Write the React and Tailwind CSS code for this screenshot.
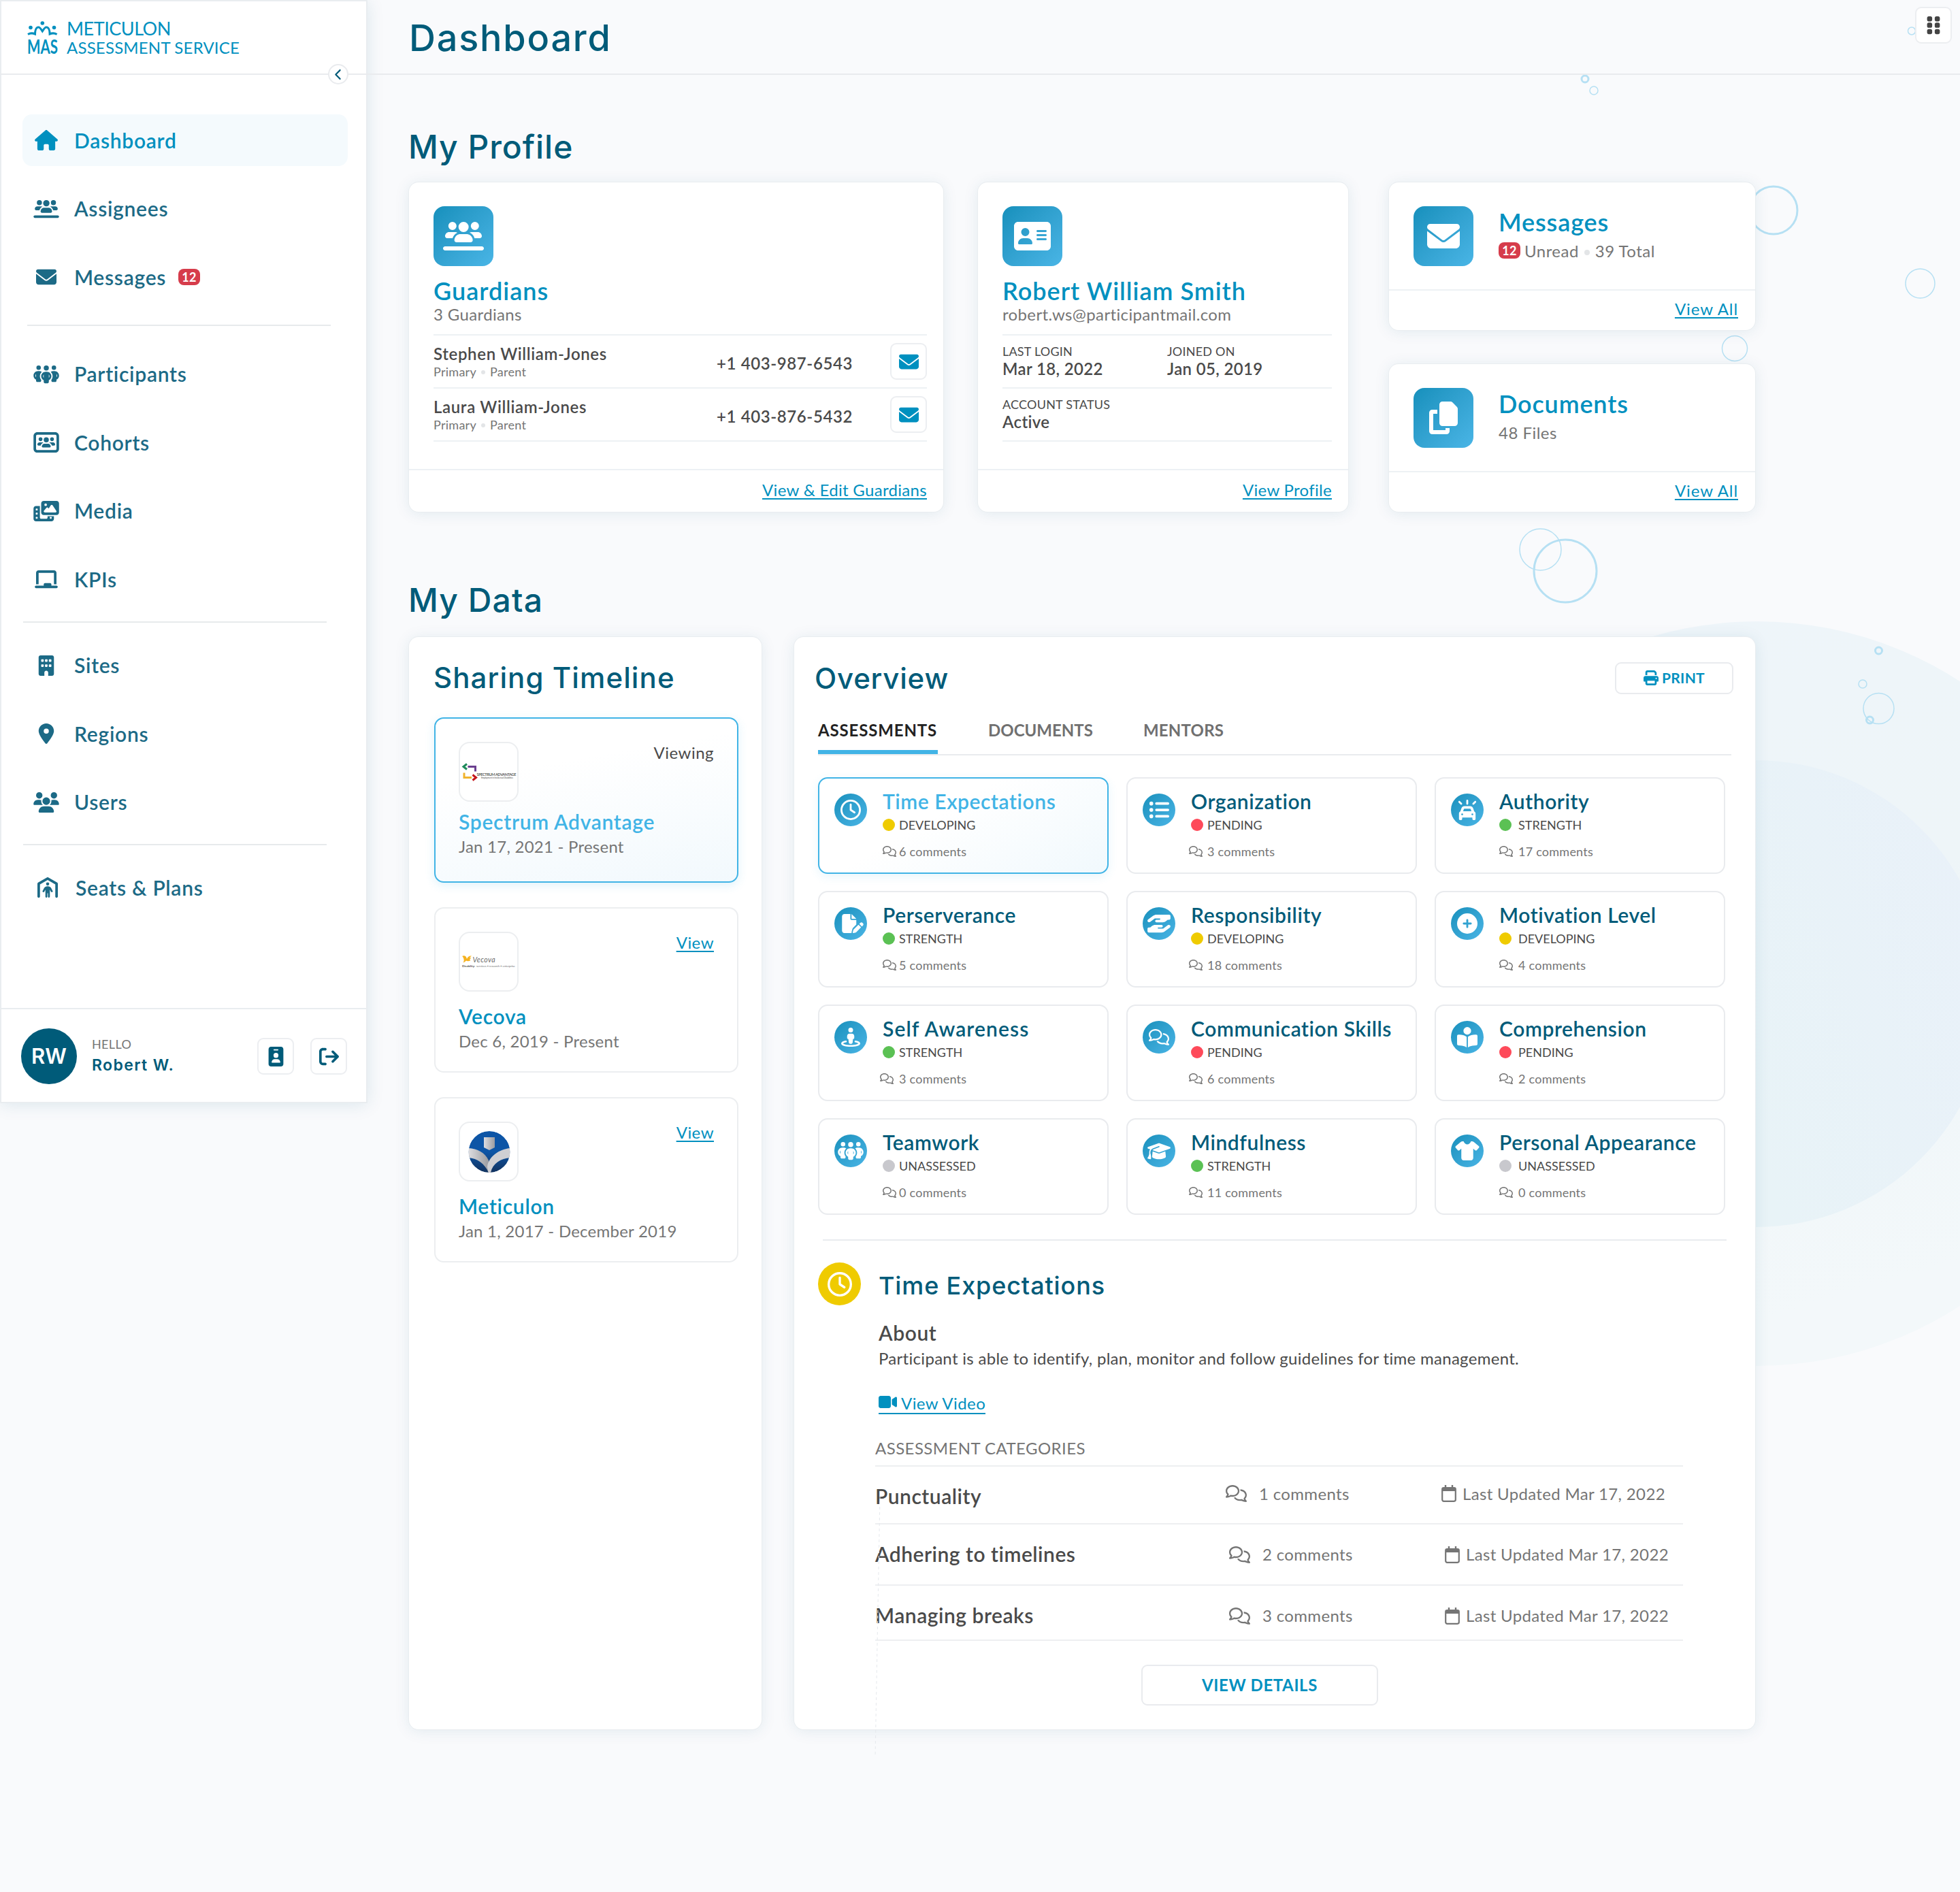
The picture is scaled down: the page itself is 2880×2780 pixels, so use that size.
import {
  FaAddressCard,
  FaArrowRightFromBracket,
  FaBookOpenReader,
  FaBuilding,
  FaCarOn,
  FaChalkboard,
  FaChevronLeft,
  FaCirclePlus,
  FaCopy,
  FaEnvelope,
  FaFilePen,
  FaGraduationCap,
  FaGripVertical,
  FaHandHoldingHand,
  FaHouse,
  FaIdBadge,
  FaListUl,
  FaLocationDot,
  FaPeopleGroup,
  FaPersonShelter,
  FaPhotoFilm,
  FaPrint,
  FaRegClock,
  FaRegComments,
  FaShirt,
  FaStreetView,
  FaUsers,
  FaUsersLine,
  FaUsersRectangle,
  FaVideo,
} from 'react-icons/fa6'

const HEADING = "font-['Inter',sans-serif] font-[450] text-[#005b79]"
const CARD =
  'bg-white rounded-[14px] shadow-[0_0_0_1px_#e9edf0,0_2px_22px_rgba(0,91,121,0.10)]'
const LINK = 'text-[#0090bf] underline decoration-2 underline-offset-[3px]'

const navGroups = [
  [
    { label: 'Dashboard', icon: FaHouse, active: true },
    { label: 'Assignees', icon: FaUsersLine },
    { label: 'Messages', icon: FaEnvelope, badge: 12 },
  ],
  [
    { label: 'Participants', icon: FaPeopleGroup },
    { label: 'Cohorts', icon: FaUsersRectangle },
    { label: 'Media', icon: FaPhotoFilm },
    { label: 'KPIs', icon: FaChalkboard },
  ],
  [
    { label: 'Sites', icon: FaBuilding },
    { label: 'Regions', icon: FaLocationDot },
    { label: 'Users', icon: FaUsers },
  ],
  [{ label: 'Seats & Plans', icon: FaPersonShelter }],
]

const groupClass = ['', 'mt-[21px]', 'mt-[13px]', 'mt-[12px] pl-[2px]']
const dividerClass = ['mt-[19px] ml-[40px]', 'mt-[11px] ml-[34px]', 'mt-[11px] ml-[34px]']

const guardians = [
  { name: 'Stephen William-Jones', phone: '+1 403-987-6543' },
  { name: 'Laura William-Jones', phone: '+1 403-876-5432' },
]

const assessments = [
  { title: 'Time Expectations', status: 'DEVELOPING', comments: 6, icon: FaRegClock, size: 'h-[30px]', active: true },
  { title: 'Organization', status: 'PENDING', comments: 3, icon: FaListUl, size: 'h-[30px]' },
  { title: 'Authority', status: 'STRENGTH', comments: 17, icon: FaCarOn, size: 'h-[30px]' },
  { title: 'Perserverance', status: 'STRENGTH', comments: 5, icon: FaFilePen, size: 'h-[28px] ml-[5px]' },
  { title: 'Responsibility', status: 'DEVELOPING', comments: 18, icon: FaHandHoldingHand, size: 'h-[30px]' },
  { title: 'Motivation Level', status: 'DEVELOPING', comments: 4, icon: FaCirclePlus, size: 'h-[30px]' },
  { title: 'Self Awareness', status: 'STRENGTH', comments: 3, icon: FaStreetView, size: 'h-[28px]' },
  { title: 'Communication Skills', status: 'PENDING', comments: 6, icon: FaRegComments, size: 'h-[24px]' },
  { title: 'Comprehension', status: 'PENDING', comments: 2, icon: FaBookOpenReader, size: 'h-[30px]' },
  { title: 'Teamwork', status: 'UNASSESSED', comments: 0, icon: FaPeopleGroup, size: 'h-[30px]' },
  { title: 'Mindfulness', status: 'STRENGTH', comments: 11, icon: FaGraduationCap, size: 'h-[27px]' },
  { title: 'Personal Appearance', status: 'UNASSESSED', comments: 0, icon: FaShirt, size: 'h-[28px]' },
]

// spacing of the small status / comment icons, one entry per column
const dotGap = ['mr-[6px]', 'mr-[6px]', 'mr-[10px]']
const commentGap = ['mr-[4px]', '-ml-[3px] mr-[7px]', 'mr-[8px]']

const statusColor = {
  DEVELOPING: 'bg-[#efcb00]',
  PENDING: 'bg-[#fe4a5a]',
  STRENGTH: 'bg-[#5bc154]',
  UNASSESSED: 'bg-[#c8c8cd]',
}

const categories = [
  { name: 'Punctuality', comments: 1, row: 'h-[85px] pt-[3px]', meta: '-mt-[7px]', shift: '' },
  { name: 'Adhering to timelines', comments: 2, row: 'h-[90px] pb-[2px]', meta: 'mt-[2px]', shift: 'pl-[5px]' },
  { name: 'Managing breaks', comments: 3, row: 'h-[81px] pt-[7px]', meta: 'mt-[2px]', shift: 'pl-[5px]' },
]

const bubbles = [
  [2809, 45.5, 5.5, 1.5],
  [2329, 116, 5, 3],
  [2342, 133, 6, 1.5],
  [2606, 309, 35, 3],
  [2821.5, 416.5, 21.5, 1.5],
  [2549, 512, 18.5, 1.5],
  [2263.5, 807.5, 30.5, 1.5],
  [2300, 839, 46, 3],
  [2760.5, 956, 5, 3],
  [2737, 1005, 6, 1.5],
  [2760.5, 1041, 22.5, 1.5],
  [2747.5, 1058, 5, 3],
]

function Backdrop() {
  return (
    <svg className="absolute inset-0" width="2880" height="2780" viewBox="0 0 2880 2780" fill="none">
      <defs>
        <linearGradient id="outer" x1="0" y1="0" x2="0.3" y2="1">
          <stop offset="0" stopColor="#eef5fa" />
          <stop offset="0.5" stopColor="#eef5f8" />
          <stop offset="1" stopColor="#f3f8fa" />
        </linearGradient>
        <linearGradient id="inner" x1="0" y1="0.6" x2="1" y2="0.3">
          <stop offset="0.4" stopColor="#e8f3f7" />
          <stop offset="1" stopColor="#e9f1f9" />
        </linearGradient>
      </defs>
      <circle cx="2582" cy="1460" r="547" fill="url(#outer)" />
      <circle cx="2580" cy="1460" r="343" fill="url(#inner)" />
      {bubbles.map(([cx, cy, r, w]) => (
        <circle key={`${cx}-${cy}`} cx={cx} cy={cy} r={r} stroke="#b6e0f3" strokeWidth={w} />
      ))}
    </svg>
  )
}

function Logo() {
  return (
    <div className="flex pl-[38px] pt-[30px] text-[#0090bf]">
      <svg className="shrink-0" width="54" height="64" viewBox="-2 0 54 64" fill="none">
        <circle cx="5" cy="10.5" r="2.8" fill="currentColor" />
        <circle cx="22.3" cy="4" r="2.8" fill="currentColor" />
        <circle cx="39.5" cy="10.5" r="2.8" fill="currentColor" />
        <path
          d="M1 20.5c4-2.500 7-2 10.500-.5 0-5 1.500-10 5-10 2.500 0 4.500 4 5.800 6 1.300-2 3.300-6 5.800-6 3.500 0 5 5 5 10 3.500-1.500 6.500-2 10.500.5"
          stroke="currentColor"
          strokeWidth="3"
        />
        <text x="0" y="49" fontSize="29" fontWeight="700" textLength="45" lengthAdjust="spacingAndGlyphs" fill="currentColor">
          MAS
        </text>
      </svg>
      <div className="ml-[6px]">
        <div className="h-[26px] text-[27px] leading-[24px] tracking-[-0.018em]">METICULON</div>
        <div className="whitespace-nowrap text-[24px] leading-[28px] tracking-[0.008em]">ASSESSMENT SERVICE</div>
      </div>
    </div>
  )
}

function CalendarIcon() {
  return (
    <svg className="mr-[9px] shrink-0" width="22" height="25" viewBox="0 0 22 25" fill="none">
      <path d="M6 0v5M16 0v5" stroke="currentColor" strokeWidth="2.400" />
      <rect x="1.200" y="4.200" width="19.600" height="19.600" rx="2.200" stroke="currentColor" strokeWidth="2.200" />
      <path d="M1 4h20v5H1z" fill="currentColor" />
    </svg>
  )
}

function Badge({ children }) {
  return (
    <span className="flex h-[24px] w-[32px] items-center justify-center rounded-[8px] bg-[#d63c4b] text-[18px] font-bold leading-none tracking-[0.02em] text-white">
      {children}
    </span>
  )
}

function IconButton({ icon: Icon, className }) {
  return (
    <button className="flex h-[54px] w-[54px] shrink-0 items-center justify-center rounded-[9px] border-2 border-[#eceef1] bg-white">
      <Icon className={className} />
    </button>
  )
}

function Sidebar() {
  return (
    <aside className="relative flex h-[1621px] w-[540px] shrink-0 flex-col bg-white shadow-[inset_0_0_0_2px_#e9edf0,0_2px_24px_rgba(0,91,121,0.12)]">
      <div className="relative h-[110px] shrink-0 border-b-2 border-[#e9ebee]">
        <Logo />
        <button className="absolute left-[482px] top-[94px] flex h-[30px] w-[30px] items-center justify-center rounded-full border-2 border-[#e9ebee] bg-white text-[#005b79]">
          <FaChevronLeft className="h-[17px] w-[17px]" />
        </button>
      </div>

      <nav className="pt-[46px]">
        {navGroups.map((group, i) => (
          <div key={i}>
            <div className={groupClass[i]}>
              {group.map(({ label, icon: Icon, active, badge }) => (
                <div key={label} className="flex h-[100.5px] items-center pl-[33px]">
                  <div
                    className={`flex h-[76px] w-[478px] items-center rounded-[14px] ${
                      active ? 'bg-[#f4fafd] text-[#0090bf]' : 'text-[#1c6a86]'
                    }`}
                  >
                    <div className="flex w-[70px] justify-center">
                      <Icon className="h-[30px] w-[38px]" />
                    </div>
                    <span className="ml-[6px] text-[30px] font-semibold tracking-[0.024em]">{label}</span>
                    {badge && (
                      <span className="ml-[18px]">
                        <Badge>{badge}</Badge>
                      </span>
                    )}
                  </div>
                </div>
              ))}
            </div>
            {i < 3 && <div className={`h-[2px] w-[446px] bg-[#e7eaec] ${dividerClass[i]}`} />}
          </div>
        ))}
      </nav>

      <div className="mt-auto flex h-[140px] shrink-0 items-center border-t-2 border-[#e9edf0] pl-[31px]">
        <div className="flex h-[82px] w-[82px] items-center justify-center rounded-full bg-[#005b79] font-['Inter',sans-serif] text-[31px] font-semibold text-white">
          RW
        </div>
        <div className="-mt-[3px] ml-[22px] w-[243px]">
          <div className="text-[18px] leading-[28px] tracking-[0.02em] text-[#757575]">HELLO</div>
          <div className="mt-px font-['Inter',sans-serif] text-[23px] font-semibold leading-[32px] tracking-[0.06em] text-[#005b79]">
            Robert W.
          </div>
        </div>
        <div className="flex gap-6 text-[#005b79]">
          <IconButton icon={FaIdBadge} className="h-[29px] w-[29px]" />
          <IconButton icon={FaArrowRightFromBracket} className="h-[29px] w-[29px]" />
        </div>
      </div>
    </aside>
  )
}

function Tile({ icon: Icon }) {
  return (
    <div className="flex h-[88px] w-[88px] shrink-0 items-center justify-center rounded-[16px] bg-linear-135 from-[#1590bc] to-[#49b5e6] text-white">
      <Icon className="h-[48px] w-[60px]" />
    </div>
  )
}

function ProfileHead({ icon, title, subtitle }) {
  return (
    <>
      <Tile icon={icon} />
      <div className="mt-[16px] text-[36px] font-semibold leading-[40px] tracking-[0.028em] text-[#0090bf]">{title}</div>
      <div className="text-[24px] leading-[30px] tracking-[0.015em] text-[#757575]">{subtitle}</div>
    </>
  )
}

function GuardiansCard() {
  return (
    <div className={`flex h-[484px] w-[785px] flex-col ${CARD}`}>
      <div className="pl-[36px] pr-[24px] pt-[35px]">
        <ProfileHead icon={FaUsersLine} title="Guardians" subtitle="3 Guardians" />
        <div className="mt-[14px] border-t-2 border-[#edf1f4]">
          {guardians.map((g) => (
            <div key={g.name} className="flex h-[78px] items-center border-b-2 border-[#edf1f4]">
              <div className="flex-1 pt-[3px]">
                <div className="text-[24px] font-semibold leading-[28px] tracking-[0.027em] text-[#4a4a4a]">{g.name}</div>
                <div className="flex items-center text-[18px] leading-[25px] tracking-[0.015em] text-[#757575]">
                  Primary
                  <span className="mx-[7px] h-[6px] w-[6px] rounded-full bg-[#e3e5e7]" />
                  Parent
                </div>
              </div>
              <div className="mr-[55px] mt-[5px] text-[24px] font-semibold tracking-[0.025em] text-[#4a4a4a]">{g.phone}</div>
              <span className="text-[#0090bf]">
                <IconButton icon={FaEnvelope} className="h-[29px] w-[29px]" />
              </span>
            </div>
          ))}
        </div>
      </div>
      <div className="mt-auto flex h-[63px] items-center justify-end border-t-2 border-[#edf1f4] pb-[3px] pr-[24px]">
        <a className={`text-[24px] tracking-[0.013em] ${LINK}`}>View &amp; Edit Guardians</a>
      </div>
    </div>
  )
}

function Field({ label, value }) {
  return (
    <div className="w-[243px] pt-[11px] text-[#4a4a4a]">
      <div className="text-[18px] leading-[24px] tracking-[0.012em]">{label}</div>
      <div className="text-[24px] font-semibold leading-[28px] tracking-[0.015em]">{value}</div>
    </div>
  )
}

function ProfileCard() {
  return (
    <div className={`ml-[51px] flex h-[484px] w-[544px] flex-col ${CARD}`}>
      <div className="pl-[36px] pr-[24px] pt-[35px]">
        <ProfileHead icon={FaAddressCard} title="Robert William Smith" subtitle="robert.ws@participantmail.com" />
        <div className="mt-[14px] flex h-[80px] border-y-2 border-[#edf1f4]">
          <Field label="LAST LOGIN" value="Mar 18, 2022" />
          <Field label="JOINED ON" value="Jan 05, 2019" />
        </div>
        <div className="flex h-[78px] border-b-2 border-[#edf1f4]">
          <Field label="ACCOUNT STATUS" value="Active" />
        </div>
      </div>
      <div className="mt-auto flex h-[63px] items-center justify-end border-t-2 border-[#edf1f4] pb-[3px] pr-[24px]">
        <a className={`text-[24px] tracking-[0.013em] ${LINK}`}>View Profile</a>
      </div>
    </div>
  )
}

function SummaryCard({ icon, title, children }) {
  return (
    <div className={`h-[217px] w-[538px] ${CARD}`}>
      <div className="flex h-[157px] gap-[36px] pl-[36px] pt-[35px]">
        <Tile icon={icon} />
        <div className="pl-px pt-px">
          <div className="text-[36px] font-semibold leading-[44px] tracking-[0.024em] text-[#0090bf]">{title}</div>
          <div className="flex h-[42px] items-center text-[24px] tracking-[0.02em] text-[#757575]">{children}</div>
        </div>
      </div>
      <div className="flex h-[60px] items-center justify-end border-t-2 border-[#edf1f4] pb-[4px] pr-[25px]">
        <a className={`text-[24px] tracking-[0.038em] ${LINK}`}>View All</a>
      </div>
    </div>
  )
}

function SpectrumLogo() {
  return (
    <svg width="84" height="84" viewBox="2 2 84 84" fill="none">
      <path d="M12 32.500l-5 4 5 4" stroke="#1f8a5b" strokeWidth="3" />
      <path d="M13.500 36.500h11v7" stroke="#6b3f8f" strokeWidth="3" />
      <path d="M8 45.500v7h11" stroke="#f0b32d" strokeWidth="3" />
      <path d="M20.500 48.500l5 4-5 4" stroke="#c4161c" strokeWidth="3" />
      <text x="26.500" y="50" fontSize="5.600" fontWeight="600" textLength="58" fill="#444">SPECTRUM ADVANTAGE</text>
      <text x="33" y="54" fontSize="3.200" textLength="47" fill="#555">Employment in Intellectual Disabilities</text>
    </svg>
  )
}

function VecovaLogo() {
  return (
    <svg width="84" height="84" viewBox="2 2 84 84" fill="none">
      <path
        d="M5 36c3-1.500 6-.5 7 4 1.500-3.500 3.500-5 7-4.500l-3 2.500 2.500.5-2.500 2 1.500 1.500c-2.500 1.500-5 1.500-6.500.5-1.500 1.500-3 2.500-4.500 3 1-1.500 1.500-3 1-5-.500-2-1-3.500-2.500-4.500z"
        fill="#f5b21f"
      />
      <text x="20.500" y="44.500" fontSize="10.500" fontStyle="italic" textLength="33" fill="#6b6b6b">Vecova</text>
      <text x="5" y="52" fontSize="4.500" fontWeight="700" textLength="19" fill="#555">Disability:</text>
      <text x="26" y="52" fontSize="4.500" textLength="57" fill="#777">services • research • enterprise</text>
    </svg>
  )
}

function MeticulonLogo() {
  return (
    <svg width="84" height="84" viewBox="2 2 84 84" fill="none">
      <defs>
        <linearGradient id="disc" x1="0" y1="0" x2="0" y2="1">
          <stop offset="0.500" stopColor="#0d55a6" />
          <stop offset="1" stopColor="#12325e" />
        </linearGradient>
        <linearGradient id="silver" x1="0" y1="0" x2="1" y2="0">
          <stop offset="0" stopColor="#dedee1" />
          <stop offset="1" stopColor="#9b9ca1" />
        </linearGradient>
        <clipPath id="round">
          <circle cx="45" cy="44.500" r="30.500" />
        </clipPath>
      </defs>
      <g clipPath="url(#round)">
        <circle cx="45" cy="44.500" r="30.500" fill="url(#disc)" />
        <path d="M14 39c14 1 24 6 30 18v18C38 62 28 54 14 53z" fill="url(#silver)" />
        <path d="M76 39C60 40 43 52 42 67l2 10 3-2c3-14 15-21 29-22z" fill="#cfcfd3" />
        <path d="M37 23h16v15l-8 4-8-4z" fill="url(#silver)" />
      </g>
    </svg>
  )
}

const timeline = [
  { name: 'Spectrum Advantage', dates: 'Jan 17, 2021 - Present', logo: SpectrumLogo, viewing: true },
  { name: 'Vecova', dates: 'Dec 6, 2019 - Present', logo: VecovaLogo },
  { name: 'Meticulon', dates: 'Jan 1, 2017 - December 2019', logo: MeticulonLogo },
]

function SharingTimeline() {
  return (
    <div className={`h-[1605px] w-[518px] pl-[37px] pt-[30px] ${CARD}`}>
      <h3 className={`-ml-px text-[42px] leading-[60px] tracking-[0.026em] ${HEADING}`}>Sharing Timeline</h3>
      <div className="mt-[28px] flex flex-col gap-[36px]">
        {timeline.map(({ name, dates, logo: OrgLogo, viewing }) => (
          <div
            key={name}
            className={`h-[243px] w-[447px] rounded-[14px] border-2 pl-[34px] pr-[34px] pt-[34px] ${
              viewing
                ? 'border-[#41b4e6] bg-linear-170 from-white from-30% to-[#f2f9fd] shadow-[0_4px_14px_rgba(65,180,230,0.16)]'
                : 'border-[#eceef0] bg-white'
            }`}
          >
            <div className="flex items-start justify-between text-[24px] leading-[32px] tracking-[0.02em]">
              <div className="h-[88px] w-[88px] rounded-[16px] border-2 border-[#eceef0] bg-white tracking-normal">
                <OrgLogo />
              </div>
              {viewing ? <span className="text-[#4a4a4a]">Viewing</span> : <a className={LINK}>View</a>}
            </div>
            <div
              className={`text-[30px] font-semibold leading-[40px] tracking-[0.024em] ${
                viewing ? 'mt-[9px] text-[#41b4e6]' : 'mt-[16px] text-[#0090bf]'
              }`}
            >
              {name}
            </div>
            <div className="mt-px text-[24px] leading-[32px] tracking-[0.01em] text-[#757575]">{dates}</div>
          </div>
        ))}
      </div>
    </div>
  )
}

function AssessmentCard({ title, status, comments, icon: Icon, size, active, column }) {
  const wide = title === 'Self Awareness'

  return (
    <div
      className={`flex h-[142px] rounded-[14px] border-2 pl-[22px] pt-[16px] ${
        active
          ? 'border-[#41b4e6] bg-linear-150 from-white from-40% to-[#f1f9fd] shadow-[0_4px_14px_rgba(65,180,230,0.12)]'
          : 'border-[#e9ebee] bg-white'
      }`}
    >
      <div className="mt-[6px] flex h-[48px] w-[48px] shrink-0 items-center justify-center rounded-full bg-linear-135 from-[#1590bc] to-[#49b5e6] text-white">
        <Icon className={`w-[38px] ${size}`} />
      </div>
      <div className="ml-[23px]">
        <div
          className={`whitespace-nowrap text-[30px] font-semibold leading-[34px] ${
            wide ? 'tracking-[0.037em]' : 'tracking-[0.019em]'
          } ${active ? 'text-[#41b4e6]' : 'text-[#005b79]'}`}
        >
          {title}
        </div>
        <div className="mt-[3px] flex h-[30px] items-center text-[18px] text-[#4a4a4a]">
          <span className={`h-[18px] w-[18px] rounded-full ${dotGap[column]} ${statusColor[status]}`} />
          {status}
        </div>
        <div className="mt-[9px] flex h-[30px] items-center text-[18px] tracking-[0.013em] text-[#757575]">
          <FaRegComments className={`h-[16px] w-[20px] ${wide ? '-ml-[4px] mr-[8px]' : commentGap[column]}`} />
          {comments} comments
        </div>
      </div>
    </div>
  )
}

function TimeExpectations() {
  return (
    <>
      <div className="ml-[35px] mt-[32px] flex h-[63px] items-center">
        <div className="flex h-[63px] w-[63px] items-center justify-center rounded-full bg-[#efcb00] text-white">
          <FaRegClock className="h-[36px] w-[36px]" />
        </div>
        <h4 className={`ml-[26px] pt-[5px] text-[36px] tracking-[0.024em] ${HEADING}`}>Time Expectations</h4>
      </div>
      <div className="ml-[124px] mt-[20px] text-[#4a4a4a]">
        <div className="text-[30px] font-semibold leading-[40px] tracking-[0.02em]">About</div>
        <p className="text-[24px] leading-[36px] tracking-[0.0125em]">
          Participant is able to identify, plan, monitor and follow guidelines for time management.
        </p>
        <a className="mt-[30px] flex h-[34px] w-fit items-center border-b-2 border-[#0090bf] text-[24px] leading-[34px] tracking-[0.018em] text-[#0090bf]">
          <FaVideo className="mr-[6px] h-[24px] w-[27px]" />
          <span className="pt-[3px]">View Video</span>
        </a>
      </div>
      <div className="ml-[119px] mt-[32px] w-[1187px] text-[24px] text-[#757575]">
        <div className="leading-[36px] tracking-[0.018em]">ASSESSMENT CATEGORIES</div>
        <div className="mt-[7px] border-t-2 border-[#edeff1]">
          {categories.map((c) => (
            <div key={c.name} className={`flex items-center border-b-2 border-[#edeff1] ${c.row}`}>
              <div className="w-[515px] text-[30px] font-semibold tracking-[0.017em] text-[#4a4a4a]">{c.name}</div>
              <div className={`flex w-[317px] items-center tracking-[0.014em] ${c.meta} ${c.shift}`}>
                <FaRegComments className="mr-[18px] h-[25px] w-[31px]" />
                {c.comments} comments
              </div>
              <div className={`flex items-center tracking-[0.014em] ${c.meta} ${c.shift}`}>
                <CalendarIcon />
                Last Updated Mar 17, 2022
              </div>
            </div>
          ))}
        </div>
      </div>
      <button className="ml-[510px] mt-[35px] flex h-[60px] w-[348px] items-center justify-center rounded-[9px] border-2 border-[#e9ebee] bg-white text-[24px] font-bold tracking-[0.025em] text-[#0090bf]">
        VIEW DETAILS
      </button>
    </>
  )
}

function Overview() {
  return (
    <div className={`relative ml-[48px] h-[1605px] w-[1412px] ${CARD}`}>
      <div className="flex h-[90px] items-center justify-between pl-[30px] pr-[32px] pt-[30px]">
        <h3 className={`text-[42px] tracking-[0.019em] ${HEADING}`}>Overview</h3>
        <button className="flex h-[47px] w-[174px] items-center justify-center rounded-[9px] border-2 border-[#e9ebee] bg-white text-[21px] font-bold tracking-[0.015em] text-[#0090bf]">
          <FaPrint className="mr-[5px] h-[22px] w-[22px]" />
          PRINT
        </button>
      </div>
      <div className="ml-[35px] mt-[28px] flex w-[1342px] gap-[74px] border-b-2 border-[#e9ebee] text-[24px] font-bold leading-[37px] text-[#707070]">
        <div className="h-[54px] w-[176px] border-b-[6px] border-[#41b4e6] tracking-[0.036em] text-[#222]">ASSESSMENTS</div>
        <div className="w-[154px]">DOCUMENTS</div>
        <div className="tracking-[0.008em]">MENTORS</div>
      </div>
      <div className="ml-[35px] mt-[32px] grid grid-cols-[427px_427px_427px] gap-x-[26px] gap-y-[25px]">
        {assessments.map((a, i) => (
          <AssessmentCard key={a.title} {...a} column={i % 3} />
        ))}
      </div>
      <div className="ml-[42px] mt-[36px] h-[2px] w-[1328px] bg-[#e9ecef]" />
      <TimeExpectations />
      {/* dashed guide beside the categories, runs past the bottom edge */}
      <svg className="absolute left-[117px] top-[1262px]" width="12" height="384" fill="none">
        <path d="M9 0L2 384" stroke="#e6e9ed" strokeWidth="1" strokeDasharray="4 4" />
      </svg>
    </div>
  )
}

export default function App() {
  return (
    <div className="relative flex h-[2780px] w-[2880px] items-start overflow-hidden bg-[#f9fafc] font-['Lato',sans-serif]">
      <Backdrop />
      <main className="relative order-2 flex-1">
        <header className="flex h-[110px] items-center justify-between border-b-2 border-[#e9ebee] pl-[61px] pr-[12px]">
          <h1 className={`pt-[3px] text-[54px] leading-none tracking-[0.033em] ${HEADING}`}>Dashboard</h1>
          <div className="mb-[34px] text-[#444]">
            <IconButton icon={FaGripVertical} className="h-[30px] w-[30px]" />
          </div>
        </header>

        <div className="pl-[61px]">
          <h2 className={`-ml-px mt-[74px] text-[48px] leading-[64px] tracking-[0.02em] ${HEADING}`}>My Profile</h2>
          <div className="mt-[20px] flex">
            <GuardiansCard />
            <ProfileCard />
            <div className="ml-[60px] flex flex-col justify-between">
              <SummaryCard icon={FaEnvelope} title="Messages">
                <span className="mb-[2px] mr-[6px]">
                  <Badge>12</Badge>
                </span>
                Unread
                <span className="mx-[8px] mt-[4px] h-[8px] w-[8px] rounded-full bg-[#e3e5e7]" />
                39 Total
              </SummaryCard>
              <SummaryCard icon={FaCopy} title="Documents">
                48 Files
              </SummaryCard>
            </div>
          </div>

          <h2 className={`-ml-px mt-[98px] text-[48px] leading-[64px] tracking-[0.023em] ${HEADING}`}>My Data</h2>
          <div className="mt-[22px] flex">
            <SharingTimeline />
            <Overview />
          </div>
        </div>
      </main>
      <Sidebar />
    </div>
  )
}
